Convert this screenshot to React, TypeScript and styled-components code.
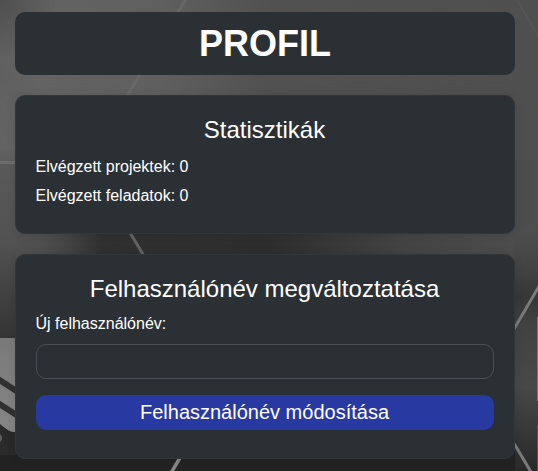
import React from "react";
import styled, { createGlobalStyle } from "styled-components";

const GlobalStyle = createGlobalStyle`
  * { box-sizing: border-box; }
  body {
    margin: 0;
    overflow: hidden;
    background: #3b3b3b;
    color: #fff;
    font-family: "Liberation Sans", Arial, sans-serif;
  }
`;

const Page = styled.main`
  position: relative;
  isolation: isolate;
  width: 538px;
  height: 471px;
  padding: 12px 23px 12px 15px;
  display: flex;
  flex-direction: column;
  gap: 20px;
  overflow: hidden;
`;

const Backdrop = styled.svg`
  position: absolute;
  inset: 0;
  z-index: -1;
`;

const TitleBar = styled.header`
  height: 63px;
  flex: none;
  border-radius: 10px;
  background: #2b3034;
  display: flex;
  align-items: center;
  justify-content: center;
`;

const Title = styled.h1`
  margin: 0;
  font-size: 36px;
  line-height: 43px;
  font-weight: 700;
`;

const Card = styled.section<{ $height: number }>`
  height: ${(p) => p.$height}px;
  flex: none;
  padding: 19px 20px 20px;
  border: 1px solid #343536;
  border-radius: 10px;
  background: #2b3034;
  box-shadow: 0 0 10px rgba(0, 0, 0, 0.1);
`;

const CardTitle = styled.h2`
  margin: 0 1px 9px 0;
  font-size: 24px;
  line-height: 29px;
  font-weight: 400;
  text-align: center;
`;

const Stats = styled.div`
  padding-top: 2px;
`;

const Line = styled.p`
  margin: 0 0 5px -0.5px;
  font-size: 16px;
  line-height: 24px;
`;

const Label = styled.label`
  display: block;
  margin-left: -0.5px;
  font-size: 16px;
  line-height: 24px;
`;

const Input = styled.input`
  display: block;
  width: 100%;
  height: 35px;
  margin: 8px 0 16px;
  padding: 6px 12px;
  border: 1px solid #495057;
  border-radius: 10px;
  background: transparent;
  color: #fff;
  font: 16px "Liberation Sans", Arial, sans-serif;
  outline: none;
`;

const Button = styled.button`
  display: block;
  width: 100%;
  height: 35px;
  padding: 0 1px 0 0;
  border: 0;
  border-radius: 10px;
  background: #2839a1;
  color: #fff;
  font: 20px/35px "Liberation Sans", Arial, sans-serif;
`;

function Background() {
  return (
    <Backdrop width="538" height="471" viewBox="0 0 538 471" aria-hidden="true">
      <defs>
        <linearGradient id="top">
          <stop offset="0" stopColor="#606060" />
          <stop offset=".08" stopColor="#636363" />
          <stop offset=".3" stopColor="#5f5f5f" />
          <stop offset=".5" stopColor="#515151" />
          <stop offset="1" stopColor="#4f4f4f" />
        </linearGradient>
        <linearGradient id="middle">
          <stop offset="0" stopColor="#525252" />
          <stop offset=".08" stopColor="#4e4e4e" />
          <stop offset=".13" stopColor="#424242" />
          <stop offset=".19" stopColor="#303030" />
          <stop offset=".5" stopColor="#2d2d2d" />
          <stop offset=".75" stopColor="#434343" />
          <stop offset="1" stopColor="#4e4e4e" />
        </linearGradient>
        <linearGradient id="left" gradientUnits="userSpaceOnUse" x1="0" y1="85" x2="0" y2="338">
          <stop offset="0" stopColor="#616161" />
          <stop offset=".25" stopColor="#636363" />
          <stop offset=".32" stopColor="#595959" />
          <stop offset=".62" stopColor="#525252" />
          <stop offset="1" stopColor="#343434" />
        </linearGradient>
        <linearGradient id="right" gradientUnits="userSpaceOnUse" x1="0" y1="230" x2="0" y2="471">
          <stop offset="0" stopColor="#4e4e4e" />
          <stop offset=".15" stopColor="#444" />
          <stop offset=".28" stopColor="#363636" />
          <stop offset=".4" stopColor="#424242" />
          <stop offset=".65" stopColor="#484848" />
          <stop offset="1" stopColor="#292929" />
        </linearGradient>
        <linearGradient id="panel" x2="0" y2="1">
          <stop offset="0" stopColor="#7a7a7a" />
          <stop offset="1" stopColor="#858585" />
        </linearGradient>
        <radialGradient id="corner" gradientUnits="userSpaceOnUse" cx="0" cy="0" r="60">
          <stop offset="0" stopColor="#484848" stopOpacity=".7" />
          <stop offset="1" stopColor="#484848" stopOpacity="0" />
        </radialGradient>
      </defs>
      <rect width="538" height="160" fill="url(#top)" />
      <rect width="60" height="60" fill="url(#corner)" />
      <rect y="160" width="538" height="311" fill="url(#middle)" />
      <rect y="85" width="16" height="255" fill="url(#left)" />
      <rect x="514" y="230" width="24" height="241" fill="url(#right)" />
      <rect y="445" width="538" height="26" fill="#222" />
      <rect y="338" width="16" height="133" fill="#2a2a2a" />
      <rect y="455" width="16" height="16" fill="#222" />
      <rect x="515" y="400" width="23" height="71" fill="url(#right)" />
      <path d="M0 338H30V432H15C10 433 4 427 0 424Z" fill="url(#panel)" />
      <path d="M-3 378.5L18 392M-3 402.5L18 416" stroke="#303030" strokeWidth="6" />
      <circle cx="-3" cy="438" r="5" fill="#606060" />
      <path d="M186 -1L122 104" stroke="#686868" strokeWidth="3" />
      <path d="M0 162.5H20" stroke="#6c6c6c" strokeWidth="3" />
      <path d="M120 216L150 266" stroke="#626262" strokeWidth="3" />
      <path d="M517 0L542 42" stroke="#555" strokeWidth="2" />
      <path d="M184 451L168 478" stroke="#858585" strokeWidth="3.5" />
      <path d="M542 281L510 336M512 440L534 477" stroke="#7a7a7a" strokeWidth="3" />
      <path d="M537.5 317V401" stroke="#777" strokeWidth="1" />
      <path d="M537.5 425V471" stroke="#555" strokeWidth="1" />
    </Backdrop>
  );
}

export default function App() {
  return (
    <>
      <GlobalStyle />
      <Page>
        <Background />
        <TitleBar>
          <Title>PROFIL</Title>
        </TitleBar>
        <Card $height={139}>
          <CardTitle>Statisztikák</CardTitle>
          <Stats>
            <Line>Elvégzett projektek: 0</Line>
            <Line>Elvégzett feladatok: 0</Line>
          </Stats>
        </Card>
        <Card $height={205}>
          <CardTitle>Felhasználónév megváltoztatása</CardTitle>
          <Label htmlFor="username">Új felhasználónév:</Label>
          <Input id="username" />
          <Button type="button">Felhasználónév módosítása</Button>
        </Card>
      </Page>
    </>
  );
}
